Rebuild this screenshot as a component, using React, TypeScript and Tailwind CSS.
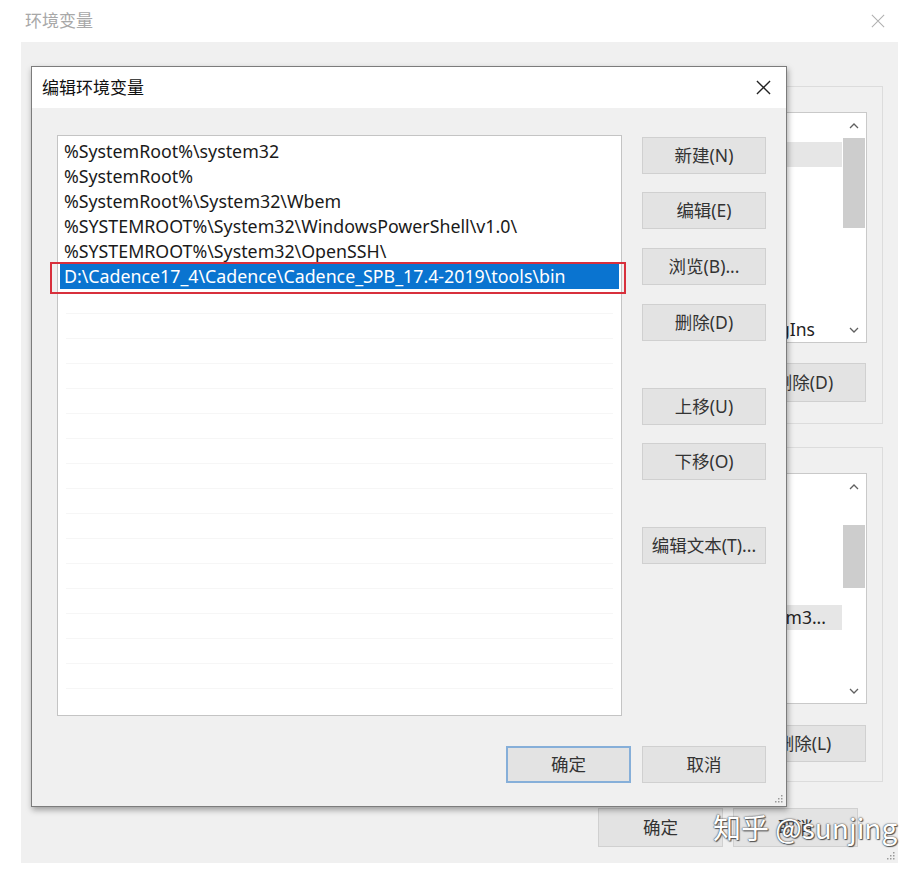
import React from "react";

const paths = [
  "%SystemRoot%\\system32",
  "%SystemRoot%",
  "%SystemRoot%\\System32\\Wbem",
  "%SYSTEMROOT%\\System32\\WindowsPowerShell\\v1.0\\",
  "%SYSTEMROOT%\\System32\\OpenSSH\\",
  "D:\\Cadence17_4\\Cadence\\Cadence_SPB_17.4-2019\\tools\\bin",
];

const font = "font-['Segoe_UI','Noto_Sans','Noto_Sans_CJK_SC',sans-serif]";

function CloseIcon({ size, color, width }: { size: number; color: string; width: number }) {
  return (
    <svg width={size} height={size} viewBox="0 0 16 16">
      <path d="M1 1 L15 15 M15 1 L1 15" stroke={color} strokeWidth={width} fill="none" />
    </svg>
  );
}

function Grip() {
  return (
    <svg width="10" height="10" viewBox="0 0 10 10">
      {[
        [8, 2],
        [5, 5],
        [8, 5],
        [2, 8],
        [5, 8],
        [8, 8],
      ].map(([x, y], i) => (
        <rect key={i} x={x} y={y} width="1.5" height="1.5" fill="#9a9a9a" />
      ))}
    </svg>
  );
}

function Chevron({ up }: { up?: boolean }) {
  return (
    <svg width="10" height="6" viewBox="0 0 10 6">
      <path d={up ? "M1 5 L5 1 L9 5" : "M1 1 L5 5 L9 1"} stroke="#606060" strokeWidth="1.3" fill="none" />
    </svg>
  );
}

function Btn({ label, className = "" }: { label: string; className?: string }) {
  return (
    <div
      className={`flex items-center justify-center bg-[#e3e3e3] border border-[#d0d0d0] text-[17.5px] text-[#333] ${className}`}
    >
      {label}
    </div>
  );
}

// 背后窗口里的列表（左边大部分被对话框挡住）
function BackList({
  rowsTop,
  thumbTop,
  thumbH,
  greyRow,
  tailRow,
  tailText,
  tailPad,
}: {
  rowsTop: number;
  thumbTop: string;
  thumbH: string;
  greyRow: number;
  tailRow: number;
  tailText: string;
  tailPad: string;
}) {
  const rows = Array.from({ length: 9 }, (_, i) => i);
  return (
    <div className="w-[92px] h-[231px] border border-[#c9c9c9] bg-white flex">
      <div className="flex-1 min-w-0 overflow-hidden" style={{ paddingTop: rowsTop }}>
        {rows.map((i) => (
          <div
            key={i}
            className={`h-[25px] leading-[25px] text-[17.5px] text-[#222] whitespace-nowrap flex justify-end ${tailPad} ${
              i === greyRow ? "bg-[#e6e6e6]" : ""
            }`}
          >
            {i === tailRow && <span className="shrink-0">{tailText}</span>}
          </div>
        ))}
      </div>
      <div className="w-[24px] flex flex-col">
        <div className="h-[25px] flex items-center justify-center">
          <Chevron up />
        </div>
        <div className="flex-1 px-[1px]">
          <div className={`bg-[#cdcdcd] ${thumbTop} ${thumbH}`}></div>
        </div>
        <div className="h-[25px] flex items-center justify-center">
          <Chevron />
        </div>
      </div>
    </div>
  );
}

export default function App() {
  return (
    <div className={`relative w-[921px] h-[873px] bg-white overflow-hidden ${font}`}>
      {/* 环境变量 窗口 */}
      <div className="ml-[21px] w-[877px]">
        <div className="h-[42px] flex items-center justify-between pl-[4px] pr-[13px]">
          <span className="text-[17px] text-[#a8a8a8]">环境变量</span>
          <CloseIcon size={14} color="#b0b0b0" width={1.2} />
        </div>
        <div className="relative h-[821px] bg-[#f0f0f0] pt-[44px] px-[15px]">
          <div className="h-[338px] border border-[#dcdcdc] pt-[25px] pr-[15px] flex flex-col items-end">
            <BackList
              rowsTop={4}
              thumbTop="mt-0"
              thumbH="h-[90px]"
              greyRow={1}
              tailRow={8}
              tailText="C:\Program Files\PlugIns"
              tailPad="pr-[27px]"
            />
            <Btn label="删除(D)" className="mt-[20px] mr-[1px] w-[124px] h-[39px]" />
          </div>
          <div className="mt-[23px] h-[335px] border border-[#dcdcdc] pt-[25px] pr-[15px] flex flex-col items-end">
            <BackList
              rowsTop={6}
              thumbTop="mt-[26px]"
              thumbH="h-[63px]"
              greyRow={5}
              tailRow={5}
              tailText="C:\WINDOWS\system32;C:\WINDOWS\System3..."
              tailPad="pr-[16px]"
            />
            <Btn label="删除(L)" className="mt-[21px] mr-[1px] w-[124px] h-[37px]" />
          </div>
          <div className="mt-[26px] flex justify-end gap-[10px] pr-[25px]">
            <Btn label="确定" className="w-[125px] h-[39px]" />
            <Btn label="取消" className="w-[125px] h-[39px]" />
          </div>
          <div className="absolute right-[3px] bottom-[3px]">
            <Grip />
          </div>
        </div>
      </div>

      {/* 编辑环境变量 对话框 */}
      <div className="absolute left-[31px] top-[66px] w-[756px] h-[741px] border border-[#7c7c7c] bg-[#f0f0f0] shadow-[1px_3px_6px_rgba(0,0,0,0.35)] flex flex-col">
        <div className="h-[41px] bg-white flex items-center justify-between pl-[10px] pr-[15px]">
          <span className="text-[17px] text-[#111]">编辑环境变量</span>
          <CloseIcon size={15} color="#222" width={1.4} />
        </div>
        <div className="relative flex-1 pt-[27px] pl-[25px]">
          <div className="flex">
            <div className="w-[565px] h-[581px] border border-[#c4c4c4] bg-white pt-[3px]">
              {paths.map((p, i) => {
                const selected = i === paths.length - 1;
                return (
                  <div
                    key={p}
                    className={`relative mx-[2px] h-[25px] leading-[25px] pl-[4px] text-[17.8px] whitespace-nowrap ${
                      selected ? "bg-[#0a74d0] text-white" : "text-[#1a1a1a]"
                    }`}
                  >
                    {p}
                    {selected && (
                      <div className="absolute -left-[10px] -right-[7px] -top-[2px] -bottom-[5px] border-2 border-[#d8303c]"></div>
                    )}
                  </div>
                );
              })}
              {Array.from({ length: 16 }, (_, i) => (
                <div key={i} className="mx-[8px] h-[25px] border-b border-[#f6f6f6]"></div>
              ))}
            </div>
            <div className="ml-[20px] mt-[2px] w-[124px] flex flex-col">
              <Btn label="新建(N)" className="h-[37px]" />
              <Btn label="编辑(E)" className="mt-[18px] h-[37px]" />
              <Btn label="浏览(B)..." className="mt-[19px] h-[37px]" />
              <Btn label="删除(D)" className="mt-[19px] h-[37px]" />
              <Btn label="上移(U)" className="mt-[47px] h-[37px]" />
              <Btn label="下移(O)" className="mt-[18px] h-[37px]" />
              <Btn label="编辑文本(T)..." className="mt-[47px] h-[37px]" />
            </div>
          </div>
          <div className="mt-[30px] flex justify-end gap-[11px] pr-[20px]">
            <Btn label="确定" className="w-[125px] h-[37px] border-2 !border-[#86afd9]" />
            <Btn label="取消" className="w-[124px] h-[37px]" />
          </div>
          <div className="absolute right-[3px] bottom-[3px]">
            <Grip />
          </div>
        </div>
      </div>

      {/* 水印 */}
      <div className="absolute left-[713px] top-[809px] text-[28px] leading-[36px] text-white font-['Noto_Sans_CJK_SC',sans-serif] [text-shadow:0_0_1px_#444,0_0_2px_#555,1px_1px_1px_#555]">
        知乎 @sunjing
      </div>
    </div>
  );
}
